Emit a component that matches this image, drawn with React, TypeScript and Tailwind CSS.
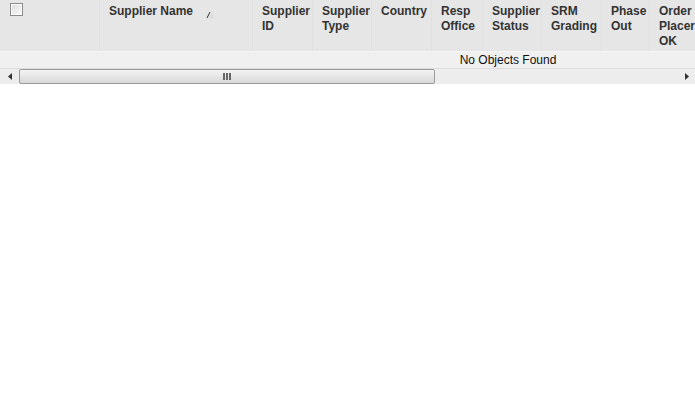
import React from "react";

// Column headers for the supplier grid
const columns: { label: string[]; width: string; sort?: boolean }[] = [
  { label: ["Supplier Name"], width: "w-[153px]", sort: true },
  { label: ["Supplier", "ID"], width: "w-[60px]" },
  { label: ["Supplier", "Type"], width: "w-[59px]" },
  { label: ["Country"], width: "w-[60px]" },
  { label: ["Resp", "Office"], width: "w-[51px]" },
  { label: ["Supplier", "Status"], width: "w-[59px]" },
  { label: ["SRM", "Grading"], width: "w-[60px]" },
  { label: ["Phase", "Out"], width: "w-[48px]" },
  { label: ["Order", "Placer", "OK"], width: "w-[80px]" },
];

const SortIcon: React.FC = () => (
  <svg width="8" height="8" viewBox="0 0 8 8" className="ml-[13px] mt-[7px]">
    <polygon points="3,7 6,2 8,7" fill="#dcdcdc" />
    <line x1="1" y1="7" x2="4" y2="1" stroke="#333" strokeWidth="1" />
  </svg>
);

const App: React.FC = () => {
  return (
    <div
      className="w-[695px] h-[417px] bg-white overflow-hidden text-[12px] text-[#333]"
      style={{ fontFamily: '"Liberation Sans", Arial, sans-serif' }}
    >
      <div className="w-full overflow-hidden">
        <div className="w-[1016px]">
          {/* Header row */}
          <div className="flex h-[52px] bg-[#e6e6e6] border-b border-[#f6f6f6]">
            <div className="w-[100px] border-r border-[#e0e0e0] pl-[10px] pt-[3px]">
              <div className="w-[13px] h-[13px] border border-[#8a8a8a] bg-gradient-to-br from-[#dcdcdc] to-[#fafafa] shadow-[inset_0_0_0_1px_#fff]" />
            </div>
            {columns.map((col, i) => (
              <div
                key={i}
                className={`${col.width} border-r border-[#e0e0e0] pl-[9px] pt-[4px] font-bold leading-[15px] flex items-start`}
              >
                <div>
                  {col.label.map((l, j) => (
                    <div key={j} className="whitespace-nowrap">
                      {l}
                    </div>
                  ))}
                </div>
                {col.sort && <SortIcon />}
              </div>
            ))}
          </div>
          {/* Empty message row */}
          <div className="h-[16px] bg-[#f0f0f0] text-center leading-[16px] text-[#111]">
            No Objects Found
          </div>
        </div>
      </div>
      {/* Horizontal scrollbar */}
      <div className="flex items-center h-[16px] bg-[#ededed] border-t border-[#dcdcdc]">
        <div className="w-[19px] flex justify-center">
          <svg width="4" height="7" viewBox="0 0 4 7">
            <polygon points="4,0 0,3.5 4,7" fill="#333" />
          </svg>
        </div>
        <div className="w-[416px] h-[15px] rounded-[2px] border border-[#9a9a9a] bg-gradient-to-b from-[#f4f4f4] to-[#d8d8d8] flex items-center justify-center">
          <div className="flex gap-[1px]">
            <div className="w-[2px] h-[7px] bg-[#666]" />
            <div className="w-[2px] h-[7px] bg-[#666]" />
            <div className="w-[2px] h-[7px] bg-[#666]" />
          </div>
        </div>
        <div className="flex-1" />
        <div className="w-[17px] flex justify-center">
          <svg width="4" height="7" viewBox="0 0 4 7">
            <polygon points="0,0 4,3.5 0,7" fill="#333" />
          </svg>
        </div>
      </div>
    </div>
  );
};

export default App;
